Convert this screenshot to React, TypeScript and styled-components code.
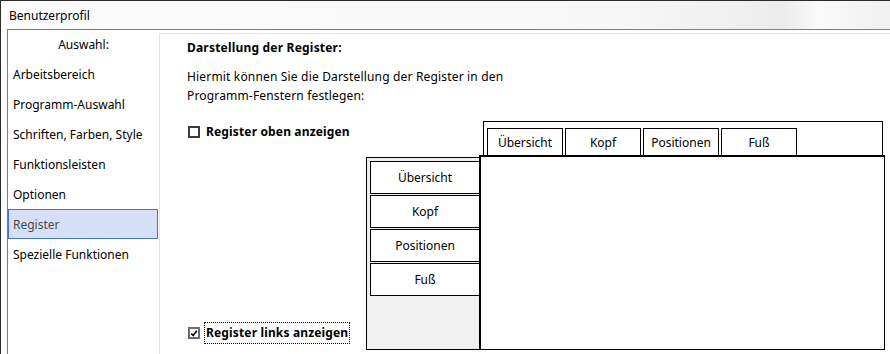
import styled, { createGlobalStyle } from 'styled-components';

const menuItems = [
  'Arbeitsbereich',
  'Programm-Auswahl',
  'Schriften, Farben, Style',
  'Funktionsleisten',
  'Optionen',
  'Register',
  'Spezielle Funktionen',
];
const tabs = ['Übersicht', 'Kopf', 'Positionen', 'Fuß'];

export default function App() {
  return (
    <Window>
      <GlobalStyle />
      <TitleBar>Benutzerprofil</TitleBar>
      <Body>
        <Sidebar>
          <SidebarHeading>Auswahl:</SidebarHeading>
          {menuItems.map((item) => (
            <NavItem key={item} $selected={item === 'Register'}>
              {item}
            </NavItem>
          ))}
        </Sidebar>
        <Content>
          <Heading>Darstellung der Register:</Heading>
          <Description>
            Hiermit können Sie die Darstellung der Register in den
            <br />
            Programm-Fenstern festlegen:
          </Description>
          <Row>
            <Options>
              <CheckLabel>
                <CheckBox />
                <LabelText>Register oben anzeigen</LabelText>
              </CheckLabel>
              <CheckLabel>
                <CheckBox $checked>
                  <svg width="10" height="10" viewBox="0 0 10 10">
                    <path d="M1.5 5 L4 7.5 L8.5 1.5" fill="none" stroke="#000" strokeWidth="2.2" />
                  </svg>
                </CheckBox>
                <LabelText $focused>Register links anzeigen</LabelText>
              </CheckLabel>
            </Options>
            <Preview>
              <TopStrip>
                {tabs.map((t) => (
                  <TopTab key={t}>{t}</TopTab>
                ))}
              </TopStrip>
              <SideStrip>
                {tabs.map((t) => (
                  <SideTab key={t}>{t}</SideTab>
                ))}
              </SideStrip>
              <PageArea />
            </Preview>
          </Row>
        </Content>
      </Body>
    </Window>
  );
}

const GlobalStyle = createGlobalStyle`
  html, body, #root {
    margin: 0;
    height: 100%;
  }
  body {
    font-family: 'Segoe UI', 'Noto Sans', sans-serif;
    font-size: 12px;
    color: #000;
    background: #fff;
    overflow: hidden;
  }
`;

const Window = styled.div`
  height: 100vh;
  display: flex;
  flex-direction: column;
  border-top: 1px solid #2b2b2b;
  border-left: 1px solid #2b2b2b;
  box-sizing: border-box;
`;
const TitleBar = styled.div`
  height: 28px;
  display: flex;
  align-items: center;
  padding-left: 8px;
  background: linear-gradient(90deg, #fbfbfb 0%, #f7f7f7 70%, #ececec 88%, #fafafa 92%, #f0f0f0 100%);
`;
const Body = styled.div`
  flex: 1;
  display: flex;
  margin-left: 6px;
  border-top: 1px solid #7e7e7e;
  border-left: 1px solid #7e7e7e;
  min-height: 0;
`;
const Sidebar = styled.nav`
  width: 151px;
  display: flex;
  flex-direction: column;
`;
const SidebarHeading = styled.div`
  height: 29px;
  display: flex;
  align-items: center;
  justify-content: center;
`;
const NavItem = styled.div<{ $selected?: boolean }>`
  height: 30px;
  width: 150px;
  box-sizing: border-box;
  display: flex;
  align-items: center;
  padding-left: 4px;
  border: 1px solid ${(p) => (p.$selected ? '#4374c9' : 'transparent')};
  background: ${(p) => (p.$selected ? '#d6dff5' : 'transparent')};
  color: ${(p) => (p.$selected ? '#4a4a4a' : '#000')};
`;
const Content = styled.main`
  flex: 1;
  display: flex;
  flex-direction: column;
  margin-top: 3px;
  padding: 6px 5px 4px 27px;
  border-top: 1px solid #e3e3e3;
  border-left: 1px solid #e3e3e3;
`;
const Heading = styled.div`
  font-weight: bold;
  line-height: 16px;
  letter-spacing: 0.2px;
`;
const Description = styled.p`
  margin: 11px 0 0;
  line-height: 19px;
  letter-spacing: 0.17px;
`;
const Row = styled.div`
  flex: 1;
  display: flex;
  margin-top: 16px;
`;
const Options = styled.div`
  width: 179px;
  display: flex;
  flex-direction: column;
  justify-content: space-between;
  padding: 1px 0 7px;
`;
const CheckLabel = styled.label`
  display: flex;
  align-items: center;
  gap: 4px;
  height: 20px;
  margin-left: 1px;
`;
const CheckBox = styled.span<{ $checked?: boolean }>`
  width: 12px;
  height: 12px;
  box-sizing: border-box;
  border: 2px solid ${(p) => (p.$checked ? '#6b6b6b' : '#3c3c3c')};
  background: #fff;
  display: flex;
  align-items: center;
  justify-content: center;
  margin-right: 1px;
  svg {
    width: 9px;
    height: 9px;
  }
`;
const LabelText = styled.span<{ $focused?: boolean }>`
  font-weight: bold;
  line-height: 18px;
  padding: 1px 1px;
  letter-spacing: 0.15px;
  outline: ${(p) => (p.$focused ? '1px dotted #000' : 'none')};
`;
const Preview = styled.div`
  flex: 1;
  display: grid;
  grid-template-columns: 113px 1fr;
  grid-template-rows: 34px 1fr;
`;
const TopStrip = styled.div`
  grid-column: 2;
  grid-row: 1;
  margin: 0 2px -1px 4px;
  border: 1px solid #000;
  border-bottom: none;
  padding: 6px 0 0 3px;
  display: flex;
  gap: 2px;
`;
const TopTab = styled.div`
  width: 76px;
  box-sizing: border-box;
  border: 1px solid #000;
  border-bottom: none;
  display: flex;
  align-items: center;
  justify-content: center;
`;
const SideStrip = styled.div`
  grid-column: 1;
  grid-row: 2;
  margin: 2px -2px 0 0;
  border: 1px solid #000;
  background: #f0f0f0;
  padding: 3px 0 0 3px;
  display: flex;
  flex-direction: column;
  gap: 1px;
`;
const SideTab = styled.div`
  height: 33px;
  box-sizing: border-box;
  border: 1px solid #000;
  background: #fff;
  display: flex;
  align-items: center;
  justify-content: center;
`;
const PageArea = styled.div`
  grid-column: 2;
  grid-row: 2;
  position: relative;
  z-index: 1;
  background: #fff;
  border: 1px solid #000;
  border-top-width: 2px;
  border-left-width: 2px;
`;
